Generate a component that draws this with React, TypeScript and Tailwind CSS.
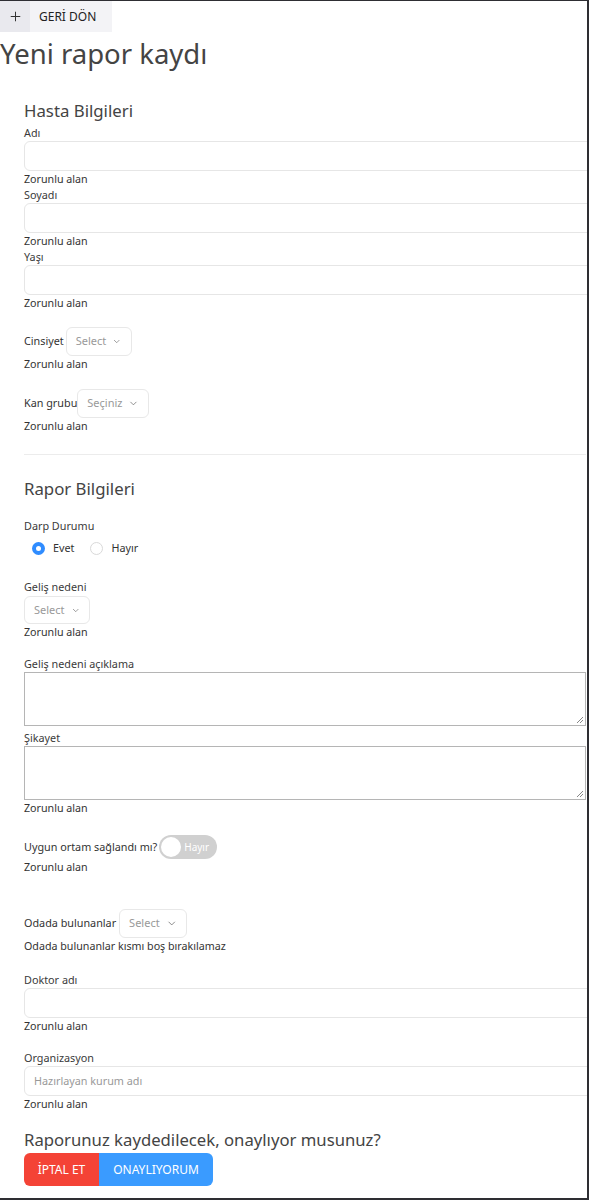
import { ChevronDown, Plus } from "lucide-react";

const font = { fontFamily: '"Noto Sans", "Open Sans", sans-serif' };

function Required({ text = "Zorunlu alan" }: { text?: string }) {
  return <p className="h-4 text-[10.7px] leading-4 text-[#333]">{text}</p>;
}

function Label({ text, className = "" }: { text: string; className?: string }) {
  return <p className={`h-4 text-[10.8px] leading-4 text-[#3a3a3a] ${className}`}>{text}</p>;
}

function TextInput({ placeholder }: { placeholder?: string }) {
  return (
    <div className="h-[30px] w-[600px] shrink-0 rounded-md border border-[#e6e6e6] bg-white px-[9px] text-[10.8px] leading-[28px] text-[#999]">
      {placeholder}
    </div>
  );
}

function SelectBox({ label, width, height = "h-[29px]" }: { label: string; width: string; height?: string }) {
  return (
    <div className={`flex items-center gap-[6px] rounded-md border border-[#e8e8e8] bg-white px-[9px] text-[11px] text-[#999] ${width} ${height}`}>
      <span>{label}</span>
      <ChevronDown size={13} strokeWidth={1.6} className="text-[#666]" />
    </div>
  );
}

function TextArea() {
  return (
    <div className="relative h-[54px] w-[562px] border border-[#b5b5b5] bg-white">
      <svg className="absolute bottom-[2px] right-[2px]" width="7" height="7" viewBox="0 0 7 7">
        <path d="M7 1L1 7M7 4L4 7" stroke="#888" strokeWidth="1" />
      </svg>
    </div>
  );
}

export default function App() {
  return (
    <div
      className="h-[1200px] w-[589px] overflow-hidden border-t border-r-2 border-b-2 border-[#2e2e33] bg-white text-[#333]"
      style={font}
    >
      <div className="flex h-[31px] w-[112px] items-center bg-[#f3f3f6]">
        <div className="flex h-full w-[30px] items-center justify-center bg-[#e9e9ee]">
          <Plus size={15} strokeWidth={1.6} className="text-[#333]" />
        </div>
        <span className="pl-[9px] text-[12px] text-[#222]">GERİ DÖN</span>
      </div>

      <h1 className="mt-[4px] text-[27.5px] leading-9 text-[#444]">Yeni rapor kaydı</h1>

      <div className="pl-[24px]">
        <h2 className="mt-[27px] text-[16.8px] leading-6 text-[#444]">Hasta Bilgileri</h2>

        <Label text="Adı" className="mt-[2px]" />
        <TextInput />
        <Required />
        <Label text="Soyadı" />
        <TextInput />
        <Required />
        <Label text="Yaşı" />
        <TextInput />
        <Required />

        <div className="mt-[16px] flex items-center gap-[2px]">
          <span className="text-[10.8px]">Cinsiyet</span>
          <SelectBox label="Select" width="w-[66px]" />
        </div>
        <Required />

        <div className="mt-[17px] flex items-center">
          <span className="text-[10.8px]">Kan grubu</span>
          <SelectBox label="Seçiniz" width="w-[72px]" />
        </div>
        <Required />

        <div className="mt-[20px] h-px w-[562px] bg-[#ececec]" />

        <h2 className="mt-[22px] text-[16.8px] leading-6 text-[#444]">Rapor Bilgileri</h2>

        <Label text="Darp Durumu" className="mt-[17px]" />
        <div className="mt-[6px] flex h-4 items-center pl-[8px] text-[10.8px]">
          <span className="flex h-[13px] w-[13px] items-center justify-center rounded-full bg-[#2f8cff]">
            <span className="h-[5px] w-[5px] rounded-full bg-white" />
          </span>
          <span className="ml-[8px]">Evet</span>
          <span className="ml-[16px] h-[13px] w-[13px] rounded-full border border-[#d9d9d9]" />
          <span className="ml-[8px]">Hayır</span>
        </div>

        <Label text="Geliş nedeni" className="mt-[23px]" />
        <div className="mt-[1px]"><SelectBox label="Select" width="w-[66px]" height="h-[28px]" /></div>
        <Required />

        <Label text="Geliş nedeni açıklama" className="mt-[16px]" />
        <TextArea />
        <Label text="Şikayet" className="mt-[4px]" />
        <TextArea />
        <Required text="Zorunlu alan" />

        <div className="mt-[19px] flex h-[24px] items-center">
          <span className="text-[10.8px]">Uygun ortam sağlandı mı?</span>
          <div className="ml-[2px] flex h-[24px] w-[58px] items-center rounded-full bg-[#d0d0d0] px-[2px]">
            <span className="h-[20px] w-[20px] rounded-full bg-white" />
            <span className="ml-[3px] text-[10px] text-white">Hayır</span>
          </div>
        </div>
        <Required />

        <div className="mt-[34px] flex items-center gap-[3px]">
          <span className="text-[10.8px]">Odada bulunanlar</span>
          <SelectBox label="Select" width="w-[68px]" />
        </div>
        <Required text="Odada bulunanlar kısmı boş bırakılamaz" />

        <Label text="Doktor adı" className="mt-[18px]" />
        <TextInput />
        <Required />

        <Label text="Organizasyon" className="mt-[16px]" />
        <TextInput placeholder="Hazırlayan kurum adı" />
        <Required />

        <h3 className="mt-[16px] text-[16.7px] leading-6 text-[#444]">Raporunuz kaydedilecek, onaylıyor musunuz?</h3>
        <div className="mt-[1px] flex">
          <button className="h-[33px] w-[75px] rounded-l-md bg-[#f44336] text-[12px] text-white">İPTAL ET</button>
          <button className="h-[33px] w-[114px] rounded-r-md bg-[#3a9bff] text-[12px] text-white">ONAYLIYORUM</button>
        </div>
      </div>
    </div>
  );
}
